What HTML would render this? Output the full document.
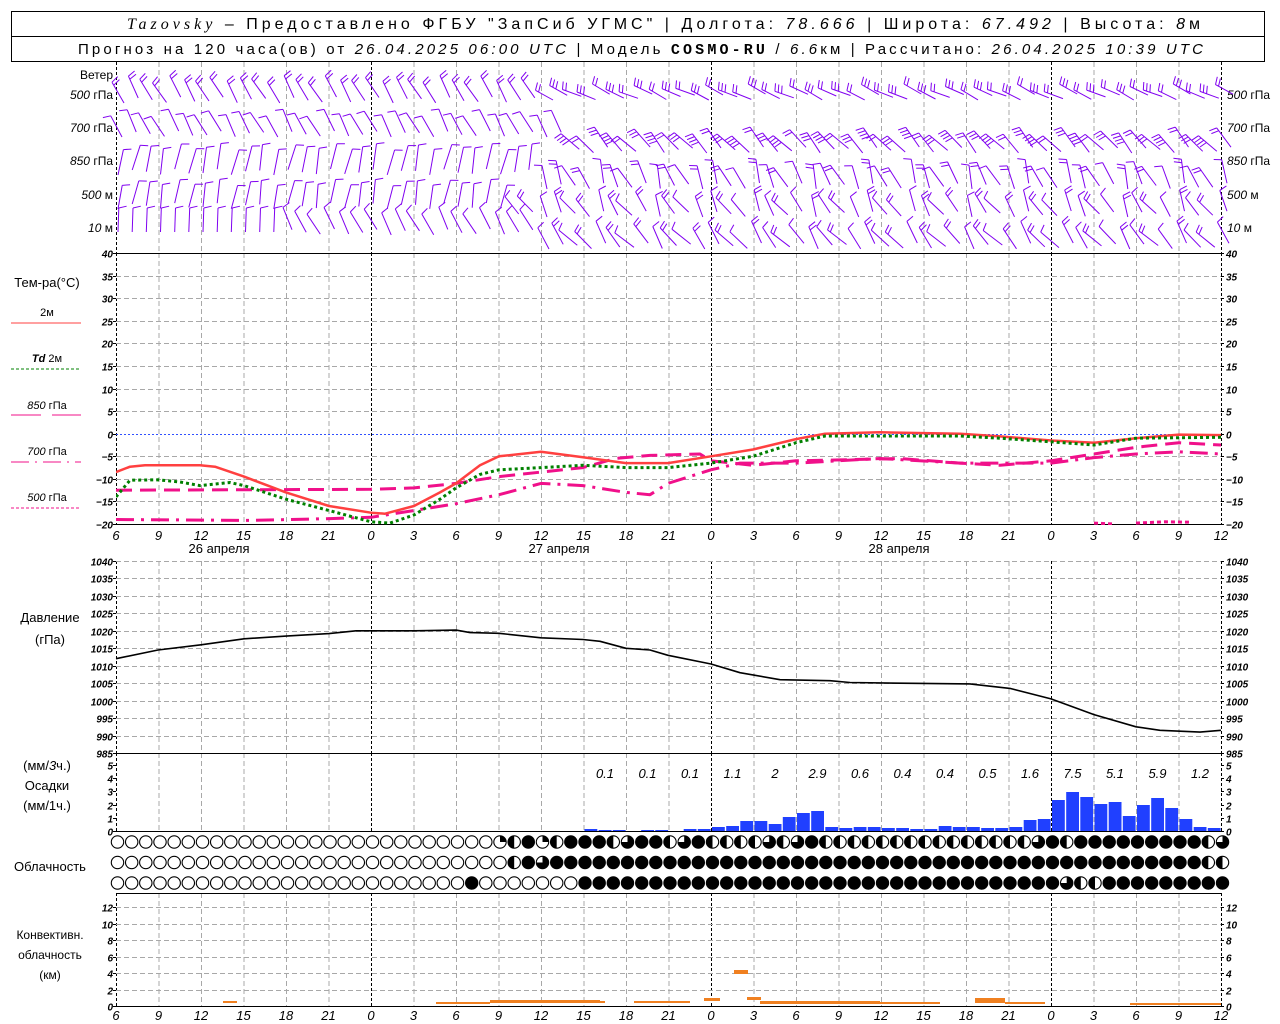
<!DOCTYPE html>
<html><head><meta charset="utf-8">
<style>
html,body{margin:0;padding:0;background:#fff;}
svg{display:block;}
text{font-family:"Liberation Sans","DejaVu Sans",sans-serif;}
.n{font-style:italic;font-size:10px;font-weight:bold;}
.t{font-style:italic;font-size:13px;}
.lb{font-size:12px;}
</style></head>
<body>
<svg id="s" width="1280" height="1024" viewBox="0 0 1280 1024" xmlns="http://www.w3.org/2000/svg">
<rect x="0" y="0" width="1280" height="1024" fill="#fff"/>
<rect x="11.5" y="11.5" width="1253" height="50" fill="none" stroke="#000"/>
<line x1="11" y1="36.5" x2="1265" y2="36.5" stroke="#000"/>
<text x="127" y="29" font-size="16" textLength="1073" lengthAdjust="spacing"><tspan font-family="Liberation Serif" font-style="italic">Tazovsky</tspan> – Предоставлено ФГБУ "ЗапСиб УГМС" | Долгота: <tspan font-style="italic">78.666</tspan> | Широта: <tspan font-style="italic">67.492</tspan> | Высота: <tspan font-style="italic">8</tspan>м</text>
<text x="78" y="54" font-size="15" textLength="1125" lengthAdjust="spacing">Прогноз на 120 часа(ов) от <tspan font-style="italic">26.04.2025 06:00 UTC</tspan>  | Модель <tspan font-weight="bold" font-family="Liberation Mono">COSMO-RU</tspan> / <tspan font-style="italic">6.6</tspan>км | Рассчитано: <tspan font-style="italic">26.04.2025 10:39 UTC</tspan></text>

<g class="lb" text-anchor="end">
<text x="113" y="79">Ветер</text>
<text x="113" y="99"><tspan font-style="italic">500</tspan> гПа</text>
<text x="113" y="132"><tspan font-style="italic">700</tspan> гПа</text>
<text x="113" y="165"><tspan font-style="italic">850</tspan> гПа</text>
<text x="113" y="199"><tspan font-style="italic">500</tspan> м</text>
<text x="113" y="232"><tspan font-style="italic">10</tspan>   м</text>
</g>
<g class="lb">
<text x="1227" y="99"><tspan font-style="italic">500</tspan> гПа</text>
<text x="1227" y="132"><tspan font-style="italic">700</tspan> гПа</text>
<text x="1227" y="165"><tspan font-style="italic">850</tspan> гПа</text>
<text x="1227" y="199"><tspan font-style="italic">500</tspan>  м</text>
<text x="1227" y="232"><tspan font-style="italic">10</tspan>   м</text>
</g>
<g class="lb" text-anchor="middle">
<text x="47" y="287" font-size="13">Тем-ра(°C)</text>
<text x="47" y="316" font-size="11">2м</text>
<line x1="11" y1="323" x2="81" y2="323" stroke="#ff4040"/>
<text x="47" y="362" font-size="11"><tspan font-style="italic" font-weight="bold">Td</tspan>  2м</text>
<line x1="11" y1="369" x2="81" y2="369" stroke="#008000" stroke-dasharray="3,2"/>
<text x="47" y="409" font-size="11"><tspan font-style="italic">850</tspan> гПа</text>
<line x1="11" y1="415" x2="41" y2="415" stroke="#f0108a"/><line x1="52" y1="415" x2="81" y2="415" stroke="#f0108a"/>
<text x="47" y="455" font-size="11"><tspan font-style="italic">700</tspan> гПа</text>
<line x1="11" y1="462" x2="81" y2="462" stroke="#f0108a" stroke-dasharray="18,6,2,6"/>
<text x="47" y="501" font-size="11"><tspan font-style="italic">500</tspan> гПа</text>
<line x1="11" y1="508" x2="81" y2="508" stroke="#f0108a" stroke-dasharray="3,2"/>
<text x="50" y="622" font-size="13">Давление</text>
<text x="50" y="644" font-size="13">(гПа)</text>
<text x="47" y="770" font-size="13">(мм/<tspan font-style="italic">3</tspan>ч.)</text>
<text x="47" y="790" font-size="13">Осадки</text>
<text x="47" y="810" font-size="13">(мм/1ч.)</text>
<text x="50" y="871" font-size="13">Облачность</text>
<text x="50" y="939" font-size="12">Конвективн.</text>
<text x="50" y="959" font-size="12">облачность</text>
<text x="50" y="979" font-size="12">(км)</text>
<text x="219" y="553" font-size="13">26 апреля</text>
<text x="559" y="553" font-size="13">27 апреля</text>
<text x="899" y="553" font-size="13">28 апреля</text>
</g>
<g id="g"></g>
</svg>
<script>
(function(){
var o=[];
var X0=116,X1=1221,HP=14.1667;
function xh(h){return X0+h*HP;}
function ln(x1,y1,x2,y2,c,d,w){o.push('<line x1="'+x1.toFixed(1)+'" y1="'+y1.toFixed(1)+'" x2="'+x2.toFixed(1)+'" y2="'+y2.toFixed(1)+'" stroke="'+c+'"'+(d?' stroke-dasharray="'+d+'"':'')+' stroke-width="'+(w||1)+'"/>');}
function tx(x,y,s,cls,anc){o.push('<text x="'+x+'" y="'+y+'" class="'+cls+'" text-anchor="'+(anc||'start')+'">'+s+'</text>');}
function pl(pts,c,w,d){o.push('<polyline fill="none" points="'+pts.map(function(p){return p[0].toFixed(1)+','+p[1].toFixed(1)}).join(' ')+'" stroke="'+c+'" stroke-width="'+w+'"'+(d?' stroke-dasharray="'+d+'"':'')+' stroke-linejoin="round"/>');}
var segs=[[62,253],[253,524],[561,753],[753,831],[893,1006]];
for(var k=0;k<=26;k++){
  var x=X0+42.5*k+0.5;
  var mid=((6+3*k)%24==0)||k==0||k==26;
  segs.forEach(function(s){ln(x,s[0],x,s[1],mid?'#000':'#a8a8a8',mid?'3,2':'5,3',1);});
}
function ty(t){return 433.7-t*4.517;}
for(var t=-20;t<=40;t+=5){
  var y=Math.round(ty(t))+0.5;
  if(t==40){ln(X0,y,X1,y,'#000');}
  else if(t==0){ln(X0,y,X1,y,'#3050ff','2,2');}
  else if(t>-20){ln(X0,y,X1,y,'#a8a8a8','5,3');}
  tx(113,y+4,(t<0?'−':'')+Math.abs(t),'n','end');tx(1226,y+4,(t<0?'−':'')+Math.abs(t),'n');
  ln(X0-3,y,X0,y,'#000');ln(X1,y,X1+3,y,'#000');
}
ln(X0,524.5,X1,524.5,'#000');
function py(p){return 561+(1040-p)*3.491;}
for(var p=985;p<=1040;p+=5){
  var y=Math.round(py(p))+0.5;
  if(p==985)ln(X0,y,X1,y,'#000');else ln(X0,y,X1,y,'#a8a8a8','5,3');
  tx(113,y+4,p,'n','end');tx(1226,y+4,p,'n');
  ln(X0-3,y,X0,y,'#000');ln(X1,y,X1+3,y,'#000');
}
for(var v=0;v<=5;v++){var y=Math.round(831-13.2*v)+0.5;tx(113,y+4,v,'n','end');tx(1226,y+4,v,'n');ln(X0-3,y,X0,y,'#000');ln(X1,y,X1+3,y,'#000');}
ln(X0,831.5,X1,831.5,'#000');
for(var v=0;v<=12;v+=2){var y=Math.round(1006-8.25*v)+0.5;if(v>0)ln(X0,y,X1,y,'#a8a8a8','5,3');tx(113,y+4,v,'n','end');tx(1226,y+4,v,'n');ln(X0-3,y,X0,y,'#000');ln(X1,y,X1+3,y,'#000');}
ln(X0,1006.5,X1,1006.5,'#000');
ln(X0,893.5,X1,893.5,'#000');
var hrs=[6,9,12,15,18,21,0,3,6,9,12,15,18,21,0,3,6,9,12,15,18,21,0,3,6,9,12];
hrs.forEach(function(h,k){var x=X0+42.5*k;tx(x,540,h,'t','middle');tx(x,1020,h,'t','middle');});
function T(a){return a.map(function(p){return [p[0],ty(p[1])];});}
o.push('<clipPath id="cp"><rect x="116" y="253" width="1105" height="272"/></clipPath><g clip-path="url(#cp)">');
pl(T([[116,-12.5],[371,-12.3],[414,-12],[456,-11],[499,-9.5],[541,-8.5],[583,-7.5],[615,-5.5],[650,-4.8],[700,-4.5],[711,-6],[753,-7],[796,-6],[840,-5.8],[900,-5.5],[960,-6.5],[1000,-7],[1051,-6],[1094,-4.5],[1136,-3],[1179,-2],[1221,-2.5]]),'#f0108a',3,'16,8');
pl(T([[116,-19],[250,-19.2],[330,-18.8],[371,-18.5],[414,-17],[456,-15.5],[499,-13.5],[541,-11],[583,-11.5],[626,-13],[650,-13.5],[668,-11],[711,-8],[740,-6.5],[796,-6.5],[880,-5.5],[960,-6.5],[1051,-6.5],[1094,-5.3],[1136,-4.5],[1179,-4],[1221,-4.5]]),'#f0108a',3,'18,7,3,7');
pl(T([[1094,-19.8],[1115,-20]]),'#f0108a',3,'4,3');
pl(T([[1136,-19.8],[1165,-19.5],[1190,-19.6]]),'#f0108a',3,'4,3');
pl(T([[116,-8.5],[130,-7.3],[145,-7],[200,-7],[215,-7.3],[244,-9.5],[286,-13],[329,-16],[371,-17.5],[385,-17.7],[414,-16],[440,-13],[456,-11],[480,-7],[499,-5],[541,-4],[583,-5.2],[626,-6.5],[668,-6.5],[711,-5],[753,-3.5],[796,-1.2],[825,0],[880,0.3],[960,0],[1000,-0.6],[1051,-1.5],[1094,-2],[1136,-1],[1179,-0.2],[1221,-0.3]]),'#ff4040',2.5);
pl(T([[116,-14],[130,-10.3],[158,-10.2],[180,-10.7],[200,-11.5],[230,-10.8],[244,-11.5],[286,-14.5],[329,-17],[371,-19.5],[390,-19.8],[414,-18],[440,-14.5],[456,-12],[480,-9],[499,-8],[541,-7.5],[583,-7],[626,-7.5],[668,-7.5],[711,-6.5],[753,-5],[796,-2],[825,-0.5],[960,-0.5],[1000,-1],[1051,-1.8],[1094,-2.5],[1136,-1],[1221,-0.8]]),'#008000',3,'3,3');
o.push('</g>');
var pp=[[116,1012],[158,1014.5],[201,1016],[244,1017.7],[286,1018.5],[329,1019.2],[356,1020],[414,1020],[456,1020.2],[470,1019.5],[499,1019.3],[541,1018],[583,1017.5],[600,1017],[626,1015],[650,1014.5],[668,1013],[711,1010.5],[740,1008],[780,1006],[830,1005.7],[850,1005.2],[900,1005],[970,1004.8],[1010,1003.5],[1051,1000.5],[1094,996],[1136,992.5],[1160,991.5],[1200,991],[1221,991.5]];
pl(pp.map(function(p){return [p[0],py(p[1])];}),'#000',1.6);
var pb={33:2,34:1,35:1,37:1,38:1,40:2,41:2,42:4,43:5,44:10,45:10,46:7,47:14,48:18,49:20,50:4,51:3,52:4,53:4,54:3,55:3,56:2,57:2,58:5,59:4,60:4,61:3,62:3,63:4,64:11,65:12,66:31,67:39,68:34,69:27,70:29,71:15,72:26,73:33,74:23,75:12,76:4,77:3};
for(var i in pb){var x=xh(+i)+1;o.push('<rect x="'+x.toFixed(1)+'" y="'+(831-pb[i])+'" width="12.8" height="'+pb[i]+'" fill="#2040ff"/>');}
var p3=['0.1','0.1','0.1','1.1','2','2.9','0.6','0.4','0.4','0.5','1.6','7.5','5.1','5.9','1.2'];
p3.forEach(function(s,k){tx(605+42.5*k,778,s,'t','middle');});
var cb=[[223,237,1001,2],[436,490,1002,2],[490,600,1000,3],[600,605,1001,2],[634,690,1001,2],[704,720,998,3],[734,748,970,4],[747,761,997,3],[760,880,1001,3],[880,940,1002,2],[975,1005,998,5],[1005,1045,1002,2],[1130,1221,1003,2]];
cb.forEach(function(b){o.push('<rect x="'+b[0]+'" y="'+b[2]+'" width="'+(b[1]-b[0])+'" height="'+b[3]+'" fill="#f08020"/>');});
function pad(s){return (s+'F'.repeat(90)).slice(0,79);}
var E=function(n){return 'E'.repeat(n);};
var r1=pad(E(27)+'QHFQHFFFHTFFHTFHHHHTHTFHHHHHHHHHHHHHHHTFHFFFFFFFFFFFFFFFFFFFFFF').split('');r1[77]='H';r1[78]='T';
var r2=(E(28)+'HFT'+'F'.repeat(46)+'HH').split('');
var r3=(E(25)+'F'+E(7)+'F'.repeat(34)+'THH'+'F'.repeat(9)).split('');
[[r1,842],[r2,862.5],[r3,883]].forEach(function(rr){
  var row=rr[0],cy=rr[1];
  for(var i=0;i<79;i++){
    var cx=xh(i)+1.5,r=6.2,c=row[i];
    if(c=='F'){o.push('<circle cx="'+cx.toFixed(1)+'" cy="'+cy+'" r="'+(r+0.5)+'" fill="#000"/>');continue;}
    o.push('<circle cx="'+cx.toFixed(1)+'" cy="'+cy+'" r="'+r+'" fill="#fff" stroke="#000" stroke-width="1.1"/>');
    if(c=='H')o.push('<path d="M'+cx.toFixed(1)+','+(cy-r)+' A'+r+','+r+' 0 0 0 '+cx.toFixed(1)+','+(cy+r)+' Z" fill="#000"/>');
    if(c=='T')o.push('<path d="M'+cx.toFixed(1)+','+cy+' L'+cx.toFixed(1)+','+(cy-r)+' A'+r+','+r+' 0 1 1 '+(cx-r).toFixed(1)+','+cy+' Z" fill="#000"/>');
    if(c=='Q')o.push('<path d="M'+cx.toFixed(1)+','+cy+' L'+cx.toFixed(1)+','+(cy-r)+' A'+r+','+r+' 0 0 1 '+(cx+r).toFixed(1)+','+cy+' Z" fill="#000"/>');
  }
});
var P='#8000f0';
function barb(x,y,phi,n,L,side){
  var a=phi*Math.PI/180,dx=Math.sin(a),dy=-Math.cos(a);
  var tx_=x+dx*L,ty_=y+dy*L;
  ln(x,y,tx_,ty_,P);
  var fa=(phi+side*75)*Math.PI/180,fx=Math.sin(fa)*8,fy=-Math.cos(fa)*8;
  for(var j=0;j<n;j++){var px=tx_-dx*j*3.5,py_=ty_-dy*j*3.5;ln(px,py_,px+fx,py_+fy,P);}
}
for(var i=0;i<79;i++){
  var x=xh(i)+2,w=Math.sin(i*1.7)*6,v=Math.cos(i*2.3)*3;
  if(i<30)barb(x+6,100+v,-30+w,2,24,1);else barb(x+10,97+v,-65+w,2+(i%2),20,1);
  if(i<32)barb(x+4,134+v,-28+w,1,24,-1);else barb(x+8,150+v,-42+w*1.5,2+(i%3),24,-1);
  if(i<30)barb(x,172+v,12+w,1,26,1);else barb(x+4,186+v,-22+w*2.5,1+(i%2),24,-1);
  if(i<28)barb(x,206+v,10+w,1,24,1);else barb(x+4,214+v,-30+w*3,1+(i%2),22,1);
  if(i<12)barb(x,232,2,1,24,1);else if(i<30)barb(x+4,232+v,-28+w,1,24,1);else barb(x+6,246+v,-38+w*2.5,1+(i%2),24,1);
}
document.getElementById('g').innerHTML=o.join('');
})();
</script>
</body></html>
